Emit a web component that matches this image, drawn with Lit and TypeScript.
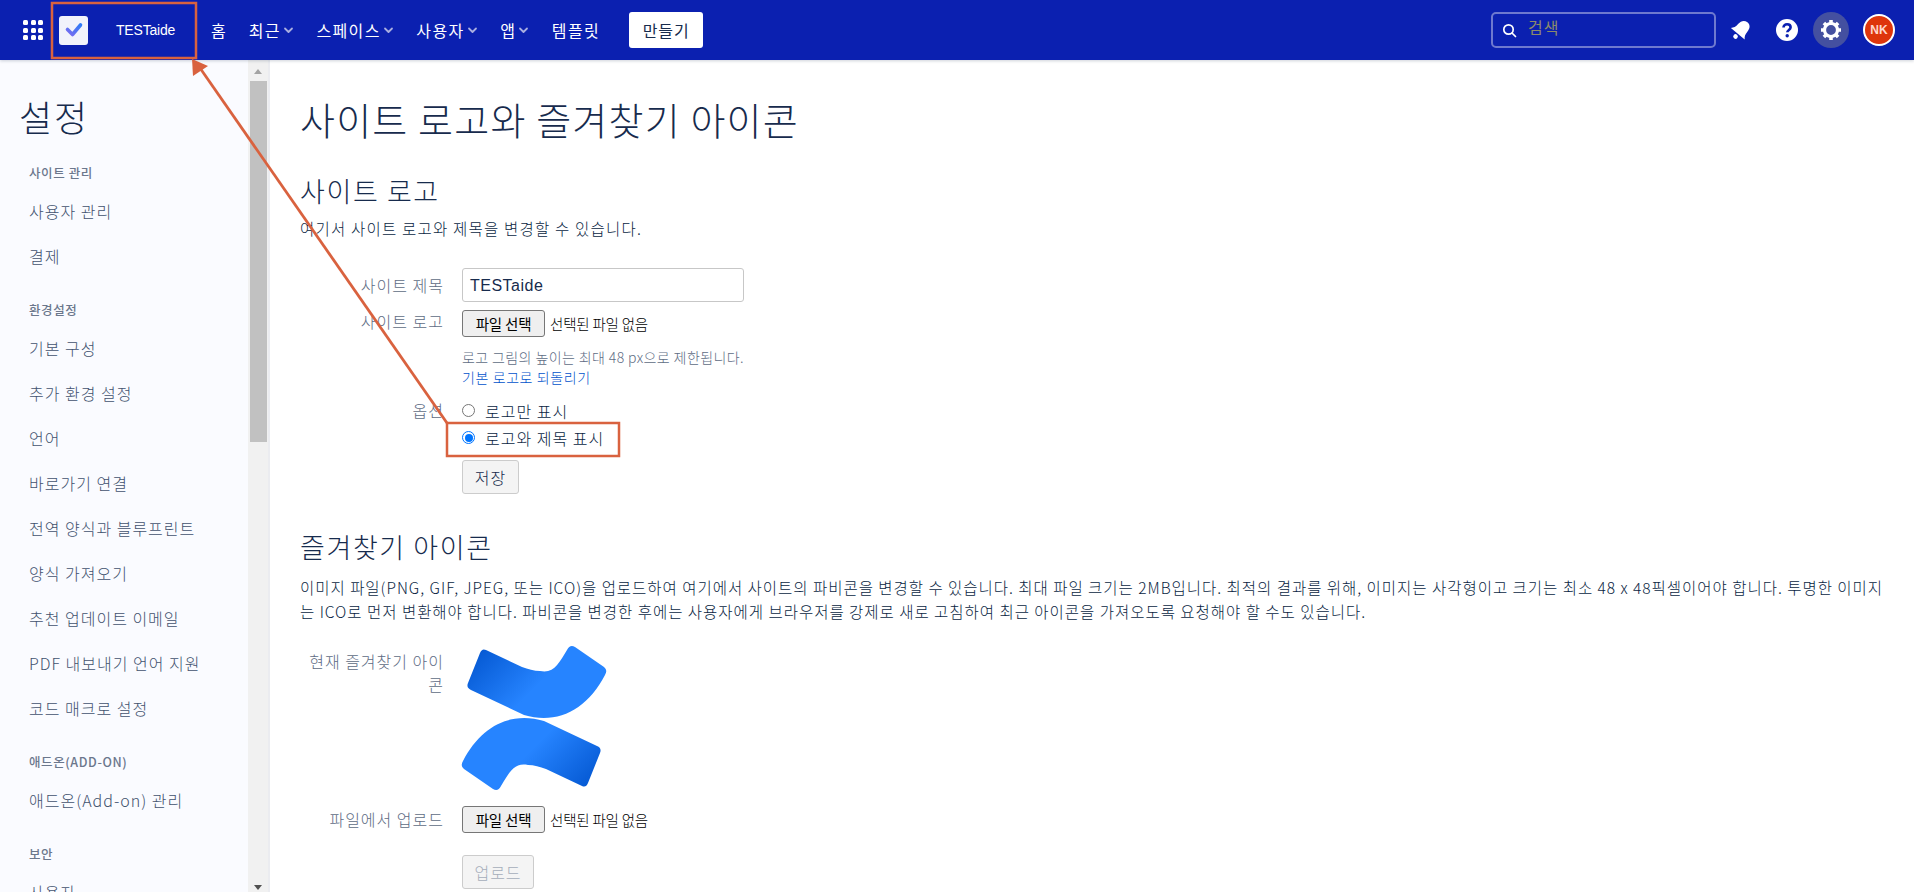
import { LitElement, html, css, svg } from "lit";
import { customElement } from "lit/decorators.js";

const groups: [string, string[]][] = [
  ["사이트 관리", ["사용자 관리", "결제"]],
  ["환경설정", ["기본 구성", "추가 환경 설정", "언어", "바로가기 연결", "전역 양식과 블루프린트", "양식 가져오기", "추천 업데이트 이메일", "PDF 내보내기 언어 지원", "코드 매크로 설정"]],
  ["애드온(ADD-ON)", ["애드온(Add-on) 관리"]],
  ["보안", ["사용자"]],
];

const chev = svg`<svg class="chev" width="13" height="12" viewBox="0 0 13 12"><path d="M3 4.500 6.500 8 10 4.500" fill="none" stroke="#a9aee0" stroke-width="1.800" stroke-linecap="round" stroke-linejoin="round"/></svg>`;

const X = "M24 5Q20 3 18 8L6 38Q4 43 9 45L62 70C95 80 125 65 143 30Q146 25 142 22L113 2Q108 -1 105 5C97 18 92 29 78 26C72 26 66 24 60 22Z";

@customElement("app-root")
export class AppRoot extends LitElement {
  static styles = css`
    :host { display: block; width: 1914px; height: 892px; overflow: hidden; position: relative; background: #fff;
      font-family: "Noto Sans CJK KR", "Noto Sans", sans-serif; color: #172b4d; font-size: 16px; letter-spacing: 1px; }
    * { box-sizing: border-box; }
    .top { height: 60px; background: #0b20b0; display: flex; align-items: center; color: #fff; box-shadow: 0 1px 3px rgba(9,30,66,.2); position: relative; z-index: 1; }
    .grid { margin-left: 23px; width: 20px; height: 20px; display: grid; grid-template-columns: repeat(3, 5px); gap: 2.5px; }
    .grid i { background: #fff; border-radius: 1.5px; display: block; }
    .logo { margin-left: 16px; width: 29px; height: 29px; border-radius: 3px; background: #f1f3fb; display: flex; align-items: center; justify-content: center; }
    .site { margin-left: 28px; font-family: "Liberation Sans", sans-serif; font-size: 14px; color: #fff; width: 70px; letter-spacing: -.2px; }
    .nav { display: flex; align-items: center; margin-left: 25px; font-size: 16px; letter-spacing: 1.4px; }
    .nav span { display: inline-flex; align-items: center; margin-right: 21.5px; }
    .chev { margin-left: 1px; }
    .create { margin-left: 7.5px; width: 74px; height: 36px; background: #fff; color: #172b4d; border-radius: 3px; display: flex; align-items: center; justify-content: center; font-size: 16px; }
    .spacer { flex: 1; }
    .search { width: 225px; height: 36px; border: 2px solid #6e79cf; border-radius: 5px; display: flex; align-items: center; padding-left: 9px; color: #8c8a6a; font-size: 16px; margin-right: 1px; }
    .search span { margin-left: 11px; margin-top: -6px; }
    .ic { display: block; }
    .bell { margin-left: 12px; }
    .help { margin-left: 22px; }
    .gear { margin-left: 14px; width: 36px; height: 36px; border-radius: 50%; background: #4450a0; display: flex; align-items: center; justify-content: center; }
    .ava { margin-left: 14px; margin-right: 19px; width: 32px; height: 32px; border: 2px solid #fff; border-radius: 50%; background: #de350b; color: #ffd7cc; display: flex; align-items: center; justify-content: center; font: bold 12px "Liberation Sans", sans-serif; letter-spacing: 0; }
    .body { display: flex; height: 832px; }
    .side { width: 248px; background: #fafbff; flex: none; overflow: hidden; padding-left: 19px; }
    .side h2 { margin: 31px 0 0; font-size: 36px; font-weight: 300; line-height: 50px; color: #172b4d; height: 50px; letter-spacing: 2px; }
    .grp { margin: 23px 0 0 10px; font-size: 12.5px; font-weight: 500; color: #6b778c; line-height: 16px; letter-spacing: .6px; }
    .grp.first { margin-top: 24px; }
    .grp + .it { margin-top: 8px; }
    .it { margin-left: 10px; height: 45px; line-height: 45px; font-size: 16px; color: #42526e; white-space: nowrap; font-weight: 300; }
    .it + .grp { margin-top: 23px; }
    .sb { width: 20px; flex: none; background: #f1f1f1; position: relative; display: flex; flex-direction: column; align-items: center; }
    .sb .thumb { position: absolute; top: 21px; left: 2px; width: 17px; height: 361px; background: #c1c1c1; }
    .up { margin-top: 9px; width: 0; height: 0; border: 5px solid transparent; border-top: 0; border-bottom: 5px solid #a3a3a3; border-left-width: 4.5px; border-right-width: 4.5px; }
    .down { position: absolute; bottom: 2px; width: 0; height: 0; border: 4.5px solid transparent; border-bottom: 0; border-top: 5px solid #505050; }
    .edge { width: 2px; flex: none; background: #ebecf0; }
    .main { flex: 1; padding: 29px 20px 0 30px; color: #172b4d; font-weight: 300; }
    h1 { margin: 0; font-size: 38px; font-weight: 300; line-height: 60px; height: 60px; letter-spacing: 1.2px; }
    h3 { margin: 0; font-size: 27px; font-weight: 300; line-height: 40px; letter-spacing: 1.6px; }
    .h3a { margin-top: 22px; }
    p { margin: 5px 0 0; font-size: 15.5px; line-height: 24px; color: #091e42; letter-spacing: 1.2px; }
    .row { display: flex; }
    .lab { width: 144px; text-align: right; color: #5e6c84; font-size: 16px; line-height: 23px; flex: none; margin-right: 18px; }
    .inp { width: 282px; height: 34px; border: 1px solid #c7c7c7; border-radius: 3px; padding-left: 7px; font-size: 16px; line-height: 34px; font-family: "Liberation Sans", sans-serif; font-weight: 400; letter-spacing: .5px; }
    .file { display: flex; align-items: center; font-size: 14.5px; color: #000; white-space: nowrap; letter-spacing: -.2px; font-weight: 300; }
    .fbtn { width: 83px; height: 27px; background: #efefef; border: 1px solid #767676; border-radius: 3px; display: flex; align-items: center; justify-content: center; margin-right: 5px; color: #000; font-weight: 400; }
    .hint { font-size: 14px; color: #5e6c84; line-height: 20px; letter-spacing: .4px; white-space: nowrap; margin-top: 10px; }
    .lnk { font-size: 14px; color: #0052cc; line-height: 24px; letter-spacing: .6px; margin-top: -2px; font-weight: 300; }
    .radio { display: flex; align-items: center; height: 27px; font-size: 16px; color: #091e42; }
    .circ { width: 13px; height: 13px; border-radius: 50%; border: 1.5px solid #767676; margin-right: 10px; flex: none; background: #fff; }
    .circ.on { border: 1.5px solid #0075ff; display: flex; align-items: center; justify-content: center; }
    .circ.on::after { content: ""; width: 8px; height: 8px; border-radius: 50%; background: #0075ff; }
    .btn { height: 34px; border: 1px solid #ccc; border-radius: 3px; background: #f4f4f4; display: flex; align-items: center; justify-content: center; font-size: 16px; }
    .save { width: 57px; margin-top: 9px; }
    .upl { width: 72px; color: #a5adba; }
    .fav { display: block; flex: none; overflow: visible; filter: blur(.5px); }
    .r1 { margin-top: 28px; }
    .r2 { margin-top: 8px; }
    .r3 { margin-top: 8px; }
    .r4 { margin-top: 22px; }
    .r5 { margin-top: 15px; }
    .r6 { margin-top: 22px; }
    .h3b { margin-top: 33px; }
    .desc { margin-top: 8px; letter-spacing: .98px; }
    .tall { line-height: 34px; }
    .mid { line-height: 27px; }
    .favlab { margin-top: 5px; }
    .note { position: absolute; inset: 0; pointer-events: none; z-index: 5; }
  `;

  render() {
    return html`
      <div class="top">
        <div class="grid">${Array.from({ length: 9 }, () => html`<i></i>`)}</div>
        <div class="logo"><svg width="24" height="24" viewBox="0 0 24 24"><defs><linearGradient id="ck" x1="0" y1="1" x2="1" y2="0"><stop offset="0" stop-color="#7a6cf0"/><stop offset="1" stop-color="#2f7bf6"/></linearGradient></defs><path d="M5.500 11.500 10.500 16.500 18.500 7" fill="none" stroke="url(#ck)" stroke-width="3.600" stroke-linecap="round" stroke-linejoin="round"/></svg></div>
        <div class="site">TESTaide</div>
        <div class="nav">
          <span>홈</span><span>최근${chev}</span><span>스페이스${chev}</span><span>사용자${chev}</span><span>앱${chev}</span><span>템플릿</span>
        </div>
        <div class="create">만들기</div>
        <div class="spacer"></div>
        <div class="search"><svg width="15" height="15" viewBox="0 0 15 15"><circle cx="6.500" cy="6.500" r="4.700" fill="none" stroke="#fff" stroke-width="1.700"/><path d="m10 10 3.500 3.500" stroke="#fff" stroke-width="1.700" stroke-linecap="round"/></svg><span>검색</span></div>
        <svg class="ic bell" width="24" height="24" viewBox="0 0 24 24"><g transform="rotate(40 12 12)" fill="#fff"><path d="M12 2C8 2 6 5 6 9c0 4-1 6-3 8h18c-2-2-3-4-3-8 0-4-2-7-6-7z"/><circle cx="12" cy="20.500" r="2.300"/></g></svg>
        <svg class="ic help" width="24" height="24" viewBox="0 0 24 24"><circle cx="12" cy="12" r="11" fill="#fff"/><path d="M8.500 9.500c0-2 1.500-3.200 3.600-3.200s3.500 1.200 3.500 3c0 2.600-3.300 2.600-3.300 5" fill="none" stroke="#0b20b0" stroke-width="2.600"/><circle cx="12.200" cy="17.800" r="1.700" fill="#0b20b0"/></svg>
        <div class="gear"><svg width="24" height="24" viewBox="0 0 24 24"><g stroke="#fff" stroke-width="3.600"><path d="M12 2v4M12 18v4M2 12h4M18 12h4M4.900 4.900l2.800 2.800M16.300 16.300l2.800 2.800M4.900 19.100l2.800-2.800M16.300 7.700l2.800-2.800"/></g><circle cx="12" cy="12" r="6.500" fill="none" stroke="#fff" stroke-width="3.200"/></svg></div>
        <div class="ava">NK</div>
      </div>
      <div class="body">
        <div class="side">
          <h2>설정</h2>
          ${groups.map(([g, items], i) => html`<div class="grp ${i === 0 ? "first" : ""}">${g}</div>${items.map((t) => html`<div class="it">${t}</div>`)}`)}
        </div>
        <div class="sb"><div class="up"></div><div class="thumb"></div><div class="down"></div></div>
        <div class="edge"></div>
        <div class="main">
          <h1>사이트 로고와 즐겨찾기 아이콘</h1>
          <h3 class="h3a">사이트 로고</h3>
          <p>여기서 사이트 로고와 제목을 변경할 수 있습니다.</p>
          <div class="row r1"><div class="lab tall">사이트 제목</div><div class="inp">TESTaide</div></div>
          <div class="row r2"><div class="lab">사이트 로고</div><div>
            <div class="file"><div class="fbtn">파일 선택</div>선택된 파일 없음</div>
            <div class="hint">로고 그림의 높이는 최대 48 px으로 제한됩니다.</div>
            <div class="lnk">기본 로고로 되돌리기</div>
          </div></div>
          <div class="row r3"><div class="lab mid">옵션</div><div>
            <div class="radio"><div class="circ"></div>로고만 표시</div>
            <div class="radio"><div class="circ on"></div>로고와 제목 표시</div>
            <div class="btn save">저장</div>
          </div></div>
          <h3 class="h3b">즐겨찾기 아이콘</h3>
          <p class="desc">이미지 파일(PNG, GIF, JPEG, 또는 ICO)을 업로드하여 여기에서 사이트의 파비콘을 변경할 수 있습니다. 최대 파일 크기는 2MB입니다. 최적의 결과를 위해, 이미지는 사각형이고 크기는 최소 48 x 48픽셀이어야 합니다. 투명한 이미지<br>는 ICO로 먼저 변환해야 합니다. 파비콘을 변경한 후에는 사용자에게 브라우저를 강제로 새로 고침하여 최근 아이콘을 가져오도록 요청해야 할 수도 있습니다.</p>
          <div class="row r4"><div class="lab favlab">현재 즐겨찾기 아이콘</div>
            <svg class="fav" width="146" height="146" viewBox="0 0 146 146">
              <defs>
                <linearGradient id="a" x1="0" y1="0" x2="1" y2=".5"><stop offset="0" stop-color="#0052cc"/><stop offset=".62" stop-color="#2684ff"/></linearGradient>
              </defs>
              <path d="${X}" fill="url(#a)"/>
              <path d="${X}" fill="url(#a)" transform="rotate(180 72 73)"/>
            </svg>
          </div>
          <div class="row r5"><div class="lab mid">파일에서 업로드</div><div class="file"><div class="fbtn">파일 선택</div><span>선택된 파일 없음</span></div></div>
          <div class="row r6"><div class="lab"></div><div class="btn upl">업로드</div></div>
        </div>
      </div>
      <svg class="note" width="1914" height="892" viewBox="0 0 1914 892">
        <rect x="52" y="3" width="144" height="55" fill="none" stroke="#d9623f" stroke-width="2.500"/>
        <rect x="447" y="423" width="172" height="33" fill="none" stroke="#d9623f" stroke-width="2.500"/>
        <path d="M447 423 200 68" stroke="#d9623f" stroke-width="2.800"/>
        <path d="M192 59 193 76 208 66Z" fill="#d9623f"/>
      </svg>
    `;
  }
}
